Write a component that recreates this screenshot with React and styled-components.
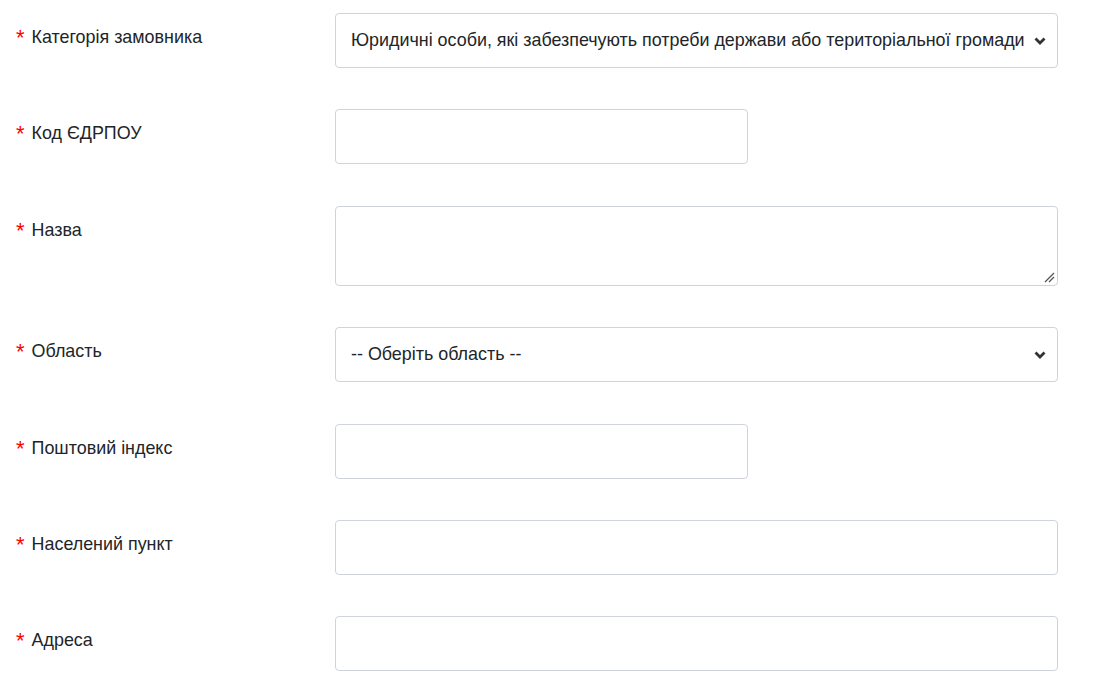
import React from 'react';
import { styled, createGlobalStyle } from 'styled-components';

const GlobalStyle = createGlobalStyle`
  body {
    margin: 0;
    background: #fff;
    font-family: "Liberation Sans", Arial, sans-serif;
  }
`;

const fields = [
  { label: 'Категорія замовника', kind: 'select', value: 'Юридичні особи, які забезпечують потреби держави або територіальної громади' },
  { label: 'Код ЄДРПОУ', kind: 'input', short: true },
  { label: 'Назва', kind: 'textarea' },
  { label: 'Область', kind: 'select', value: '-- Оберіть область --' },
  { label: 'Поштовий індекс', kind: 'input', short: true },
  { label: 'Населений пункт', kind: 'input' },
  { label: 'Адреса', kind: 'input' },
];

const Chevron = () => (
  <svg width="12" height="8" viewBox="0 0 12 8">
    <path d="M1.5 1.5 L6 6 L10.5 1.5" fill="none" stroke="#333" strokeWidth="2.8" />
  </svg>
);

const ResizeGrip = () => (
  <svg width="12" height="12" viewBox="0 0 12 12">
    <path d="M11 2 L2 11 M11 6 L6 11" stroke="#555" strokeWidth="1.3" />
  </svg>
);

const App = () => {
  return (
    <>
      <GlobalStyle />
      <Form>
        {fields.map((f) => (
          <Row key={f.label}>
            <Label>
              <Star>*</Star>
              {f.label}
            </Label>
            {f.kind === 'select' && (
              <Select>
                <SelectText>{f.value}</SelectText>
                <Chevron />
              </Select>
            )}
            {f.kind === 'input' && <Input $short={f.short} />}
            {f.kind === 'textarea' && (
              <TextArea>
                <Grip>
                  <ResizeGrip />
                </Grip>
              </TextArea>
            )}
          </Row>
        ))}
      </Form>
    </>
  );
};

const Form = styled.div`
  padding: 13px 0 0 16px;
  display: flex;
  flex-direction: column;
`;

const Row = styled.div`
  display: grid;
  grid-template-columns: 319px 723px;
  align-items: start;
  margin-bottom: 41.4px;
`;

const Label = styled.div`
  padding-top: 14px;
  font-size: 17.9px;
  color: #212529;
  display: flex;
  gap: 7px;
`;

const Star = styled.span`
  color: #ff0000;
  font-size: 22px;
  line-height: 21px;
`;

const Box = styled.div`
  box-sizing: border-box;
  border: 1px solid #ced4da;
  border-radius: 4px;
  background: #fff;
  height: 55px;
`;

const Select = styled(Box)`
  display: flex;
  align-items: center;
  justify-content: space-between;
  padding: 0 11px 0 15px;
`;

const SelectText = styled.span`
  font-size: 17.9px;
  color: #212529;
  white-space: nowrap;
`;

const Input = styled(Box)`
  width: ${(p) => (p.$short ? '413px' : '723px')};
`;

const TextArea = styled(Box)`
  height: 80px;
  position: relative;
`;

const Grip = styled.div`
  position: absolute;
  right: 2px;
  bottom: 2px;
  line-height: 0;
`;

export default App;
